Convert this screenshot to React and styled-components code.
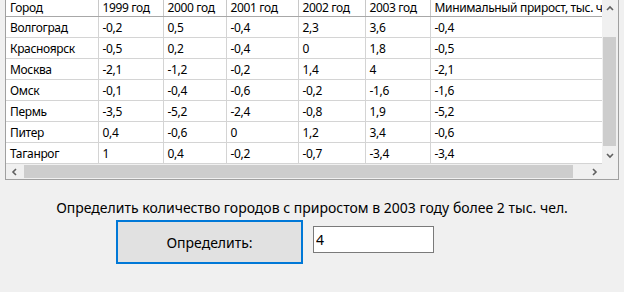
import React from "react";
import styled, { createGlobalStyle } from "styled-components";

const GlobalStyle = createGlobalStyle`
  html, body {
    margin: 0;
    padding: 0;
    background: #f0f0f0;
  }
  body {
    font-family: "Noto Sans", "Liberation Sans", sans-serif;
  }
`;

const Window = styled.div`
  width: 624px;
  height: 292px;
  background: #f0f0f0;
  overflow: hidden;
  display: flex;
  flex-direction: column;
  align-items: flex-start;
`;

const GridFrame = styled.div`
  margin: -2px 0 0 5px;
  width: 612px;
  border: 1px solid #a0a0a0;
  background: #f0f0f0;
  display: flex;
  flex-direction: column;
`;

const GridBody = styled.div`
  display: flex;
`;

const Table = styled.table`
  width: 596px;
  table-layout: fixed;
  border-collapse: collapse;
  background: #fff;
  font-size: 12px;
  letter-spacing: -0.35px;
  color: #000;
`;

const Th = styled.th`
  height: 17px;
  padding: 0 0 0 4px;
  text-align: left;
  font-weight: normal;
  white-space: nowrap;
  overflow: hidden;
  border-right: 1px solid #c8c8c8;
  border-bottom: 1px solid #a8a8a8;
  &:last-child {
    border-right: none;
  }
`;

const Td = styled.td`
  height: 20px;
  padding: 0 0 0 4px;
  white-space: nowrap;
  overflow: hidden;
  border-right: 1px solid #d4d4d4;
  border-bottom: 1px solid #d4d4d4;
  &:last-child {
    border-right: none;
  }
`;

const VScroll = styled.div`
  width: 15px;
  display: flex;
  flex-direction: column;
  background: #f0f0f0;
`;

const HScroll = styled.div`
  display: flex;
  height: 15px;
  background: #f0f0f0;
`;

const Arrow = styled.div`
  flex: 0 0 ${(p) => p.size}px;
  width: ${(p) => (p.horizontal ? p.size : 15)}px;
  height: ${(p) => (p.horizontal ? 15 : p.size)}px;
  display: flex;
  align-items: center;
  justify-content: center;
`;

const Track = styled.div`
  flex: 1;
  display: flex;
  flex-direction: ${(p) => (p.horizontal ? "row" : "column")};
  padding: ${(p) => (p.horizontal ? "1px 0" : "0 1px")};
`;

const Thumb = styled.div`
  background: #cdcdcd;
  flex: 0 0 ${(p) => p.size}px;
  margin-${(p) => (p.horizontal ? "left" : "top")}: ${(p) => p.offset}px;
`;

const Corner = styled.div`
  width: 15px;
  flex: 0 0 15px;
  background: #f0f0f0;
`;

const Panel = styled.div`
  align-self: stretch;
  display: flex;
  flex-direction: column;
  align-items: center;
  padding-top: 18px;
`;

const Label = styled.div`
  font-size: 14px;
  color: #000;
  line-height: 20px;
`;

const Controls = styled.div`
  display: flex;
  align-items: flex-start;
  align-self: flex-start;
  margin: 2px 0 0 116px;
  gap: 10px;
`;

const Button = styled.button`
  width: 187px;
  height: 44px;
  border: 2px solid #0078d7;
  background: #e1e1e1;
  font-family: inherit;
  font-size: 14px;
  color: #000;
  padding: 0;
`;

const Input = styled.input`
  box-sizing: border-box;
  width: 121px;
  height: 27px;
  margin-top: 6px;
  border: 1px solid #7a7a7a;
  background: #fff;
  font-family: inherit;
  font-size: 14px;
  padding: 0 0 0 2px;
  outline: none;
`;

const Chevron = ({ dir }) => {
  const pts = {
    up: "1,5 4,2 7,5",
    down: "1,2 4,5 7,2",
    left: "5,1 2,4 5,7",
    right: "2,1 5,4 2,7",
  }[dir];
  return (
    <svg width="8" height="8" viewBox="0 0 8 8">
      <polyline points={pts} fill="none" stroke="#606060" strokeWidth="1.6" />
    </svg>
  );
};

const columns = [
  { title: "Город", width: 92 },
  { title: "1999 год", width: 65 },
  { title: "2000 год", width: 63 },
  { title: "2001 год", width: 72 },
  { title: "2002 год", width: 67 },
  { title: "2003 год", width: 65 },
  { title: "Минимальный прирост, тыс. чел.", width: 172 },
];

const rows = [
  ["Волгоград", "-0,2", "0,5", "-0,4", "2,3", "3,6", "-0,4"],
  ["Красноярск", "-0,5", "0,2", "-0,4", "0", "1,8", "-0,5"],
  ["Москва", "-2,1", "-1,2", "-0,2", "1,4", "4", "-2,1"],
  ["Омск", "-0,1", "-0,4", "-0,6", "-0,2", "-1,6", "-1,6"],
  ["Пермь", "-3,5", "-5,2", "-2,4", "-0,8", "1,9", "-5,2"],
  ["Питер", "0,4", "-0,6", "0", "1,2", "3,4", "-0,6"],
  ["Таганрог", "1", "0,4", "-0,2", "-0,7", "-3,4", "-3,4"],
];

export default function App() {
  return (
    <Window>
      <GlobalStyle />
      <GridFrame>
        <GridBody>
          <Table>
            <colgroup>
              {columns.map((c) => (
                <col key={c.title} style={{ width: c.width }} />
              ))}
            </colgroup>
            <thead>
              <tr>
                {columns.map((c) => (
                  <Th key={c.title}>{c.title}</Th>
                ))}
              </tr>
            </thead>
            <tbody>
              {rows.map((r) => (
                <tr key={r[0]}>
                  {r.map((v, i) => (
                    <Td key={i}>{v}</Td>
                  ))}
                </tr>
              ))}
            </tbody>
          </Table>
          <VScroll>
            <Arrow size={19}>
              <Chevron dir="up" />
            </Arrow>
            <Track>
              <Thumb size={109} offset={19} />
            </Track>
            <Arrow size={17}>
              <Chevron dir="down" />
            </Arrow>
          </VScroll>
        </GridBody>
        <HScroll>
          <Arrow horizontal size={17}>
            <Chevron dir="left" />
          </Arrow>
          <Track horizontal>
            <Thumb horizontal size={549} offset={1} />
          </Track>
          <Arrow horizontal size={17}>
            <Chevron dir="right" />
          </Arrow>
          <Corner />
        </HScroll>
      </GridFrame>
      <Panel>
        <Label>
          Определить количество городов с приростом в 2003 году более 2 тыс. чел.
        </Label>
      </Panel>
      <Controls>
        <Button>Определить:</Button>
        <Input defaultValue="4" readOnly />
      </Controls>
    </Window>
  );
}
